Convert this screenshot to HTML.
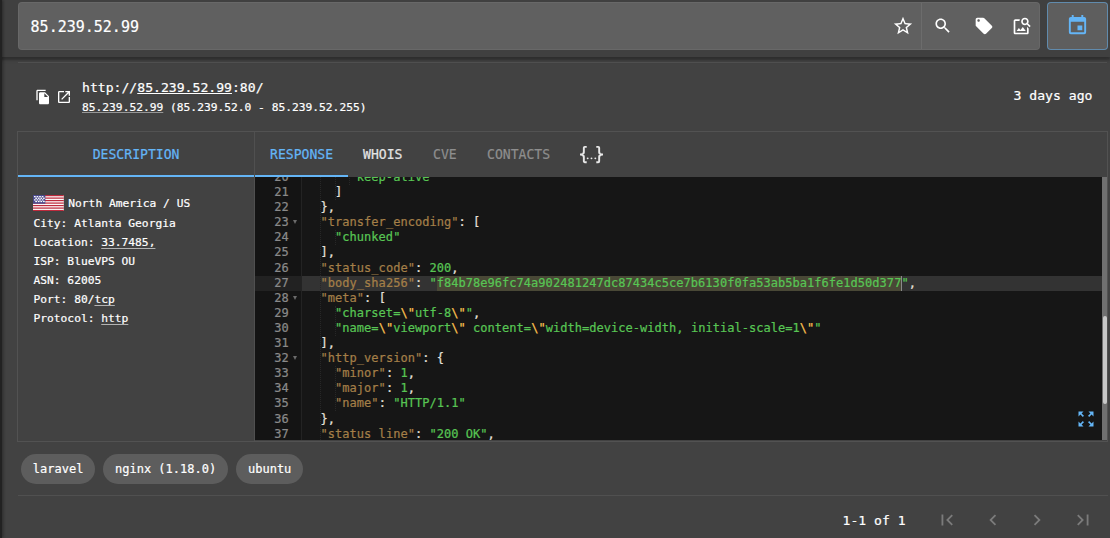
<!DOCTYPE html>
<html lang="en">
<head>
<meta charset="utf-8">
<title>85.239.52.99</title>
<style>
html,body{margin:0;padding:0;}
body{width:1110px;height:538px;overflow:hidden;position:relative;background:#424242;color:#fff;
  font-family:"DejaVu Sans Mono","Liberation Mono",monospace;font-size:13.125px;-webkit-text-stroke:0.2px;}
#page{position:absolute;left:0;top:0;width:1110px;height:538px;}
.abs{position:absolute;}
#strip{left:0;top:0;width:2px;height:538px;background:#222;box-shadow:1px 0 3px rgba(0,0,0,.45);z-index:5;}
#header{left:0;top:0;width:1110px;height:57px;background:#404040;box-shadow:0 3px 2px rgba(0,0,0,.24),0 1px 6px rgba(0,0,0,.12);z-index:2;}
#search{left:18px;top:2px;width:1022px;height:48px;background:#606060;border-radius:4px;box-shadow:inset 0 0 0 1px rgba(255,255,255,.05);}
#search .txt{left:12.6px;top:1.8px;line-height:47px;font-size:15px;color:#fff;white-space:pre;}
#vdiv{left:903px;top:1px;width:1px;height:46px;background:#6c6c6c;}
#cal{left:1047px;top:2px;width:59px;height:46px;background:#5e5e5e;border:1px solid rgba(100,181,246,.52);border-radius:4px;}
svg{display:block;position:absolute;fill:#fff;}
.hline{position:absolute;height:1px;background:#505050;}
.t{position:absolute;white-space:pre;line-height:1;}
u{text-decoration:underline;text-decoration-skip-ink:none;text-decoration-thickness:1.3px;text-underline-offset:1.2px;}
u.d2{text-decoration-color:rgba(255,255,255,.6);text-underline-offset:1.6px;text-decoration-thickness:1px;}
u.dim{text-decoration-color:rgba(255,255,255,.45);text-underline-offset:0.9px;text-decoration-thickness:1px;}
/* card */
#card{left:17px;top:131px;width:1089px;height:309px;border:1px solid #525252;}
#cardv{left:254px;top:132px;width:1px;height:309px;background:#505050;}
.tab{position:absolute;top:146px;line-height:15px;font-size:13.125px;white-space:pre;transform:scaleY(1.13);transform-origin:50% 7.8px;}
.blue{color:#64b5f6;}
.bar{position:absolute;top:175px;height:2px;background:#64b5f6;}
/* left panel */
.dl{position:absolute;left:33.5px;font-size:11.25px;line-height:13px;white-space:pre;color:#fff;}
/* editor */
#ed{left:255px;top:177px;width:852px;height:263px;background:#161616;overflow:hidden;
  font-family:"DejaVu Sans Mono","Liberation Mono",monospace;font-size:12px;-webkit-text-stroke:0.22px;}
#gutter{left:0;top:0;width:46px;height:263px;background:#141414;border-right:1px solid #232323;color:#8a8a8a;}
.gl{position:absolute;left:0;width:34px;height:15.1px;line-height:15.1px;text-align:right;padding-right:12.2px;box-sizing:content-box;width:33.8px;}
.gl.act{background:#222;}
.fw{position:absolute;left:38px;top:5px;width:0;height:0;border-left:2.5px solid transparent;border-right:2.5px solid transparent;border-top:4px solid #6a6a6a;}
#scroller{left:47px;top:0;width:800px;height:263px;overflow:hidden;}
.cl{position:absolute;left:4px;letter-spacing:0.036px;height:15.1px;line-height:15.1px;white-space:pre;color:#E6E1DC;}
.cs{color:#58C554;}.cv{color:#a47f48;}.ce{color:#FDC251;}.ct{color:#E6E1DC;}
#actline{left:0;top:98.60px;width:800px;height:15.1px;background:#333;}
#sel{top:98.60px;height:15.1px;background:#494836;}
.guide{position:absolute;width:0;border-left:1px dotted #272727;}
#sbtrack{left:847px;top:0;width:5px;height:263px;background:#707070;}
#sbthumb{left:848px;top:139px;width:4px;height:88px;background:#c8c8c8;border-radius:2px;}
/* chips */
.chip{position:absolute;top:454px;height:30px;line-height:30px;border-radius:15px;background:#5d5d5d;font-size:12px;color:#fff;padding:0 12px;white-space:pre;}
</style>
</head>
<body>
<div id="page">
<div id="strip" class="abs"></div>
<div id="header" class="abs">
  <div id="search" class="abs">
    <div class="txt abs">85.239.52.99</div>
    <div id="vdiv" class="abs"></div>
  </div>
  <div id="cal" class="abs"></div>
  <!-- star -->
  <svg viewBox="0 0 24 24" style="left:891.5px;top:14.5px;width:22px;height:22px"><path d="M12,15.39L8.24,17.66L9.23,13.38L5.91,10.5L10.29,10.13L12,6.09L13.71,10.13L18.09,10.5L14.77,13.38L15.76,17.66M22,9.24L14.81,8.63L12,2L9.19,8.63L2,9.24L7.45,13.97L5.82,21L12,17.27L18.18,21L16.54,13.97L22,9.24Z"/></svg>
  <!-- search -->
  <svg viewBox="0 0 24 24" style="left:933px;top:16.1px;width:19.5px;height:19.5px"><path d="M15.5 14h-.79l-.28-.27C15.41 12.59 16 11.11 16 9.5 16 5.910 13.090 3 9.500 3S3 5.910 3 9.500 5.910 16 9.500 16c1.610 0 3.090-.590 4.230-1.570l.27.28v.79l5 4.990L20.490 19l-4.990-5zm-6 0C7.010 14 5 11.990 5 9.500S7.010 5 9.500 5 14 7.010 14 9.500 11.990 14 9.500 14z"/></svg>
  <!-- tag -->
  <svg viewBox="0 0 24 24" style="left:974px;top:15.7px;width:20px;height:20px"><path d="M21.41 11.58l-9-9C12.050 2.220 11.550 2 11 2H4c-1.100 0-2 .9-2 2v7c0 .55.220 1.050.590 1.420l9 9c.36.360.860.580 1.410.58.550 0 1.050-.220 1.410-.590l7-7c.37-.36.590-.860.590-1.410 0-.55-.230-1.060-.590-1.420zM5.500 7C4.670 7 4 6.330 4 5.500S4.670 4 5.500 4 7 4.670 7 5.500 6.330 7 5.500 7z"/></svg>
  <!-- image search -->
  <svg viewBox="0 0 24 24" style="left:1011.5px;top:16px;width:20px;height:20px"><path d="M18 13v7H4V6h5.020c.05-.71.220-1.380.48-2H4c-1.100 0-2 .9-2 2v14c0 1.100.9 2 2 2h14c1.100 0 2-.9 2-2v-5l-2-2zm-1.500 5h-11l2.750-3.530 1.960 2.360 2.750-3.540zm2.800-9.110c.44-.7.700-1.510.7-2.390C20 4.010 17.990 2 15.500 2S11 4.010 11 6.500s2.010 4.500 4.490 4.500c.88 0 1.700-.260 2.390-.7L21 13.420 22.420 12 19.300 8.890zM15.500 9C14.120 9 13 7.880 13 6.500S14.120 4 15.500 4 18 5.120 18 6.500 16.880 9 15.500 9z"/></svg>
  <!-- calendar -->
  <svg viewBox="0 0 24 24" style="left:1066px;top:14px;width:23px;height:23px;fill:#64b5f6"><path d="M19,19H5V8H19M16,1V3H8V1H6V3H5C3.890,3 3,3.890 3,5V19A2,2 0 0,0 5,21H19A2,2 0 0,0 21,19V5C21,3.890 20.100,3 19,3H18V1M17,12H12V17H17V12Z"/></svg>
</div>
<div class="hline" style="left:18px;top:62px;width:1089px;"></div>

<!-- title row -->
<svg viewBox="0 0 24 24" style="left:35px;top:89px;width:16px;height:16px"><path d="M16 1H4c-1.100 0-2 .9-2 2v14h2V3h12V1zm-1 4l6 6v10c0 1.100-.9 2-2 2H7.990C6.890 23 6 22.100 6 21l.01-14c0-1.100.89-2 1.990-2h7zm-1 7h5.500L14 6.500V12z"/></svg>
<svg viewBox="0 0 24 24" style="left:56.3px;top:88.7px;width:16px;height:16px"><path d="M19 19H5V5h7V3H5c-1.110 0-2 .9-2 2v14c0 1.100.89 2 2 2h14c1.100 0 2-.9 2-2v-7h-2v7zM14 3v2h3.590l-9.830 9.830 1.410 1.410L19 6.410V10h2V3h-7z"/></svg>
<div class="t" style="left:82px;top:80.3px;font-size:13.125px;line-height:15px;">http://<u>85.239.52.99</u>:80/</div>
<div class="t" style="left:82px;top:100.5px;font-size:11.25px;line-height:13px;"><u class="dim">85.239.52.99</u> (85.239.52.0 - 85.239.52.255)</div>
<div class="t" style="left:1013.5px;top:88.3px;font-size:13.125px;line-height:15px;">3 days ago</div>

<!-- card -->
<div id="card" class="abs"></div>
<div id="cardv" class="abs"></div>
<div class="tab blue" style="left:92.7px;">DESCRIPTION</div>
<div class="tab blue" style="left:270px;">RESPONSE</div>
<div class="tab" style="left:363px;color:#e4e4e4;">WHOIS</div>
<div class="tab" style="left:433px;color:#8e8e8e;">CVE</div>
<div class="tab" style="left:487px;color:#8e8e8e;">CONTACTS</div>
<svg viewBox="0 0 24 24" style="left:580.2px;top:142.8px;width:23px;height:23px;fill:#e8e8e8"><path d="M5,3H7V5H5V10A2,2 0 0,1 3,12A2,2 0 0,1 5,14V19H7V21H5C3.930,20.730 3,20.100 3,19V15A2,2 0 0,0 1,13H0V11H1A2,2 0 0,0 3,9V5A2,2 0 0,1 5,3M19,3A2,2 0 0,1 21,5V9A2,2 0 0,0 23,11H24V13H23A2,2 0 0,0 21,15V19A2,2 0 0,1 19,21H17V19H19V14A2,2 0 0,1 21,12A2,2 0 0,1 19,10V5H17V3H19M12,15A1,1 0 0,1 13,16A1,1 0 0,1 12,17A1,1 0 0,1 11,16A1,1 0 0,1 12,15M8,15A1,1 0 0,1 9,16A1,1 0 0,1 8,17A1,1 0 0,1 7,16A1,1 0 0,1 8,15M16,15A1,1 0 0,1 17,16A1,1 0 0,1 16,17A1,1 0 0,1 15,16A1,1 0 0,1 16,15Z"/></svg>
<div class="bar" style="left:18px;width:236px;"></div>
<div class="bar" style="left:255px;width:93px;"></div>

<!-- description panel -->
<svg viewBox="0 0 31 16" style="left:33px;top:195px;width:30.8px;height:16.2px" preserveAspectRatio="none">
  <rect width="31" height="16" fill="#ffffff"/>
  <g fill="#bd2a3c"><rect y="0" width="31" height="1.23"/><rect y="2.46" width="31" height="1.23"/><rect y="4.92" width="31" height="1.23"/><rect y="7.38" width="31" height="1.23"/><rect y="9.85" width="31" height="1.23"/><rect y="12.31" width="31" height="1.23"/><rect y="14.77" width="31" height="1.23"/></g>
  <rect width="12.4" height="8.6" fill="#4a4a8c"/>
  <g fill="#ffffff"><rect x="1" y="1" width="1.7" height="1.25"/><rect x="3.6" y="1" width="1.7" height="1.25"/><rect x="6.2" y="1" width="1.7" height="1.25"/><rect x="8.8" y="1" width="1.7" height="1.25"/><rect x="2.3" y="2.6" width="1.7" height="1.25"/><rect x="4.9" y="2.6" width="1.7" height="1.25"/><rect x="7.5" y="2.6" width="1.7" height="1.25"/><rect x="10.1" y="2.6" width="1.7" height="1.25"/><rect x="1" y="4.2" width="1.7" height="1.25"/><rect x="3.6" y="4.2" width="1.7" height="1.25"/><rect x="6.2" y="4.2" width="1.7" height="1.25"/><rect x="8.8" y="4.2" width="1.7" height="1.25"/><rect x="2.3" y="5.8" width="1.7" height="1.25"/><rect x="4.9" y="5.800" width="1.7" height="1.25"/><rect x="7.5" y="5.800" width="1.7" height="1.25"/><rect x="10.1" y="5.800" width="1.7" height="1.25"/></g>
</svg>
<div class="dl" style="left:68.3px;top:196.8px;">North America / US</div>
<div class="dl" style="top:217.1px;">City: Atlanta Georgia</div>
<div class="dl" style="top:236.4px;">Location: <u class="d2">33.7485,</u></div>
<div class="dl" style="top:255.3px;">ISP: BlueVPS OU</div>
<div class="dl" style="top:274px;">ASN: 62005</div>
<div class="dl" style="top:292.6px;">Port: 80/<u class="d2">tcp</u></div>
<div class="dl" style="top:311.6px;">Protocol: <u class="d2">http</u></div>

<!-- editor -->
<div id="ed" class="abs">
  <div id="scroller" class="abs">
    <div id="actline" class="abs"></div>
    <div id="sel" class="abs" style="left:134.7px;width:464.8px;"></div>
<div class="guide" style="left:18.45px;top:0;height:263px;"></div>
<div class="guide" style="left:32.9px;top:-7.10px;height:30.20px;"></div>
<div class="guide" style="left:32.9px;top:53.30px;height:15.10px;"></div>
<div class="guide" style="left:32.9px;top:128.80px;height:30.20px;"></div>
<div class="guide" style="left:32.9px;top:189.20px;height:45.30px;"></div>
<div class="guide" style="left:47.35px;top:-7.10px;height:15.10px;"></div>
<div class="cl" style="top:-7.10px"><span class="cs">      "keep-alive"</span></div>
<div class="cl" style="top:8.00px"><span class="ct">    ]</span></div>
<div class="cl" style="top:23.10px"><span class="ct">  },</span></div>
<div class="cl" style="top:38.20px"><span class="ct">  </span><span class="cv">"transfer_encoding"</span><span class="ct">: [</span></div>
<div class="cl" style="top:53.30px"><span class="ct">    </span><span class="cs">"chunked"</span></div>
<div class="cl" style="top:68.40px"><span class="ct">  ],</span></div>
<div class="cl" style="top:83.50px"><span class="ct">  </span><span class="cv">"status_code"</span><span class="ct">: </span><span class="cs">200</span><span class="ct">,</span></div>
<div class="cl" style="top:98.60px"><span class="ct">  </span><span class="cv">"body_sha256"</span><span class="ct">: </span><span class="cs">"f84b78e96fc74a902481247dc87434c5ce7b6130f0fa53ab5ba1f6fe1d50d377"</span><span class="ct">,</span></div>
<div class="cl" style="top:113.70px"><span class="ct">  </span><span class="cv">"meta"</span><span class="ct">: [</span></div>
<div class="cl" style="top:128.80px"><span class="ct">    </span><span class="cs">"charset=</span><span class="ce">\"</span><span class="cs">utf-8</span><span class="ce">\"</span><span class="cs">"</span><span class="ct">,</span></div>
<div class="cl" style="top:143.90px"><span class="ct">    </span><span class="cs">"name=</span><span class="ce">\"</span><span class="cs">viewport</span><span class="ce">\"</span><span class="cs"> content=</span><span class="ce">\"</span><span class="cs">width=device-width, initial-scale=1</span><span class="ce">\"</span><span class="cs">"</span></div>
<div class="cl" style="top:159.00px"><span class="ct">  ],</span></div>
<div class="cl" style="top:174.10px"><span class="ct">  </span><span class="cv">"http_version"</span><span class="ct">: {</span></div>
<div class="cl" style="top:189.20px"><span class="ct">    </span><span class="cv">"minor"</span><span class="ct">: </span><span class="cs">1</span><span class="ct">,</span></div>
<div class="cl" style="top:204.30px"><span class="ct">    </span><span class="cv">"major"</span><span class="ct">: </span><span class="cs">1</span><span class="ct">,</span></div>
<div class="cl" style="top:219.40px"><span class="ct">    </span><span class="cv">"name"</span><span class="ct">: </span><span class="cs">"HTTP/1.1"</span></div>
<div class="cl" style="top:234.50px"><span class="ct">  },</span></div>
<div class="cl" style="top:249.60px"><span class="ct">  </span><span class="cv">"status_line"</span><span class="ct">: </span><span class="cs">"200 OK"</span><span class="ct">,</span></div>
    <div class="abs" style="left:599.3px;top:98.60px;width:1px;height:15px;background:#8a8a8a;"></div>
  </div>
  <div id="gutter" class="abs">
<div class="gl" style="top:-7.10px">20</div>
<div class="gl" style="top:8.00px">21</div>
<div class="gl" style="top:23.10px">22</div>
<div class="gl" style="top:38.20px">23<i class="fw"></i></div>
<div class="gl" style="top:53.30px">24</div>
<div class="gl" style="top:68.40px">25</div>
<div class="gl" style="top:83.50px">26</div>
<div class="gl act" style="top:98.60px">27</div>
<div class="gl" style="top:113.70px">28<i class="fw"></i></div>
<div class="gl" style="top:128.80px">29</div>
<div class="gl" style="top:143.90px">30</div>
<div class="gl" style="top:159.00px">31</div>
<div class="gl" style="top:174.10px">32<i class="fw"></i></div>
<div class="gl" style="top:189.20px">33</div>
<div class="gl" style="top:204.30px">34</div>
<div class="gl" style="top:219.40px">35</div>
<div class="gl" style="top:234.50px">36</div>
<div class="gl" style="top:249.60px">37</div>
  </div>
  <div id="sbtrack" class="abs"></div>
  <div id="sbthumb" class="abs"></div>
  <svg viewBox="0 0 24 24" style="left:820.5px;top:232.2px;width:20px;height:20px;fill:#64b5f6"><path d="M15 3l2.300 2.300-2.890 2.870 1.420 1.420L18.700 6.700 21 9V3zM3 9l2.300-2.300 2.870 2.890 1.420-1.420L6.700 5.300 9 3H3zm6 12l-2.300-2.300 2.890-2.870-1.420-1.420L5.300 17.300 3 15v6zm12-6l-2.300 2.300-2.870-2.890-1.420 1.420 2.890 2.870L15 21h6z"/></svg>
</div>

<!-- chips -->
<div class="chip" style="left:20.8px;">laravel</div>
<div class="chip" style="left:103px;">nginx (1.18.0)</div>
<div class="chip" style="left:236px;">ubuntu</div>
<div class="hline" style="left:18px;top:495px;width:1090px;"></div>

<!-- footer -->
<div class="t" style="left:842.5px;top:512.5px;font-size:13.125px;line-height:15px;">1-1 of 1</div>
<svg viewBox="0 0 24 24" style="left:936px;top:509px;width:22px;height:22px;fill:#7b7b7b"><path d="M18.410 16.590L13.820 12l4.590-4.590L17 6l-6 6 6 6zM6 6h2v12H6z"/></svg>
<svg viewBox="0 0 24 24" style="left:981.6px;top:509px;width:22px;height:22px;fill:#7b7b7b"><path d="M15.410 7.410L14 6l-6 6 6 6 1.410-1.410L10.830 12z"/></svg>
<svg viewBox="0 0 24 24" style="left:1026.4px;top:509px;width:22px;height:22px;fill:#7b7b7b"><path d="M10 6L8.590 7.410 13.170 12l-4.580 4.590L10 18l6-6z"/></svg>
<svg viewBox="0 0 24 24" style="left:1071.7px;top:509px;width:22px;height:22px;fill:#7b7b7b"><path d="M5.590 7.410L10.180 12l-4.590 4.590L7 18l6-6-6-6zM16 6h2v12h-2z"/></svg>
</div>
</body>
</html>
